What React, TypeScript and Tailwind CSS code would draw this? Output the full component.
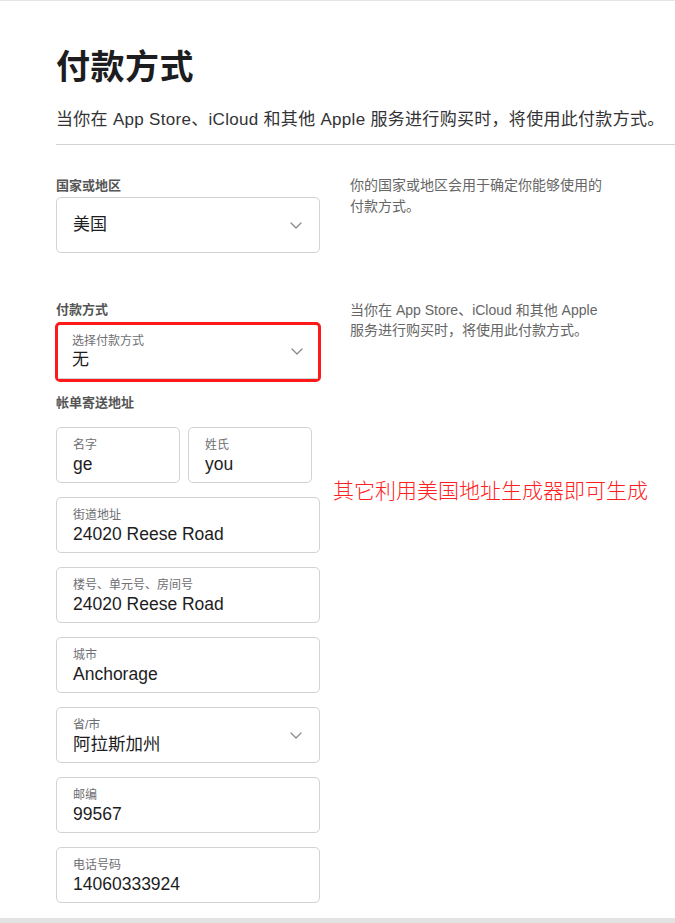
const font = { fontFamily: '"Liberation Sans", "Noto Sans CJK SC", sans-serif' };

function Chevron() {
  return (
    <svg width="12" height="7" viewBox="0 0 12 7" fill="none" className="shrink-0">
      <path d="M1 1l5 5 5-5" stroke="#86868b" strokeWidth="1.2" strokeLinecap="round" strokeLinejoin="round" />
    </svg>
  );
}

function Field({ label, value, select, className = 'w-[264px]' }: { label: string; value: string; select?: boolean; className?: string }) {
  return (
    <div className={`h-[56px] border border-[#d2d2d7] rounded-[5px] bg-white flex items-center pl-[16px] pr-[17px] ${className}`}>
      <div className="flex-1 min-w-0 pt-[1px]">
        <div className="text-[12px] leading-[16px] text-[#6e6e73]">{label}</div>
        <div className="text-[17.5px] leading-[22px] text-[#1d1d1f]">{value}</div>
      </div>
      {select && <Chevron />}
    </div>
  );
}

export default function App() {
  return (
    <div className="w-[675px] h-[923px] bg-white relative overflow-hidden border-t border-[#e5e5e5]" style={font}>
      <div className="pl-[56px] pt-[46px]">
        <h1 className="text-[34px] leading-[40px] font-bold text-[#1d1d1f] tracking-[0.5px]">付款方式</h1>
        <p className="mt-[22px] text-[17px] leading-[22px] text-[#333336] whitespace-nowrap tracking-[0.3px]">
          当你在 App Store、iCloud 和其他 Apple 服务进行购买时，将使用此付款方式。
        </p>
        <div className="mt-[13px] h-px bg-[#d2d2d7]" />

        <div className="mt-[32px] flex">
          <div className="w-[264px]">
            <div className="text-[13px] leading-[18px] font-bold text-[#555]">国家或地区</div>
            <div className="mt-[2px] h-[56px] border border-[#d2d2d7] rounded-[5px] flex items-center pl-[16px] pr-[17px]">
              <div className="flex-1 text-[17px] text-[#1d1d1f]">美国</div>
              <Chevron />
            </div>
          </div>
          <div className="ml-[30px] w-[260px] text-[14px] leading-[21px] text-[#666] -mt-[2px]">
            你的国家或地区会用于确定你能够使用的付款方式。
          </div>
        </div>

        <div className="mt-[48px] flex">
          <div className="w-[264px]">
            <div className="text-[13px] leading-[18px] font-bold text-[#555]">付款方式</div>
            <div className="mt-[3px] rounded-[5px] border-[3px] border-[#ff1a1a] -mx-px">
              <div className="h-[54px] border-b border-[#d2d2d7] flex items-center pl-[14px] pr-[15px]">
                <div className="flex-1 min-w-0">
                  <div className="text-[12px] leading-[16px] text-[#6e6e73]">选择付款方式</div>
                  <div className="text-[17px] leading-[22px] text-[#1d1d1f]">无</div>
                </div>
                <Chevron />
              </div>
            </div>
          </div>
          <div className="ml-[30px] w-[260px] text-[14px] leading-[20px] text-[#666] -mt-[1px]">
            当你在 App Store、iCloud 和其他 Apple 服务进行购买时，将使用此付款方式。
          </div>
        </div>

        <div className="mt-[12px] text-[13px] leading-[18px] font-bold text-[#555]">帐单寄送地址</div>

        <div className="mt-[15px] flex">
          <div className="flex flex-col gap-[14px]">
            <div className="flex gap-[8px]">
              <Field label="名字" value="ge" className="w-[124px]" />
              <Field label="姓氏" value="you" className="w-[124px]" />
            </div>
            <Field label="街道地址" value="24020 Reese Road" />
            <Field label="楼号、单元号、房间号" value="24020 Reese Road" />
            <Field label="城市" value="Anchorage" />
            <Field label="省/市" value="阿拉斯加州" select />
            <Field label="邮编" value="99567" />
            <Field label="电话号码" value="14060333924" />
          </div>
          <div className="ml-[13px] mt-[49px] text-[21px] leading-[26px] text-[#ff2020] whitespace-nowrap" style={{ fontFamily: '"Noto Sans CJK SC", sans-serif', fontWeight: 300 }}>
            其它利用美国地址生成器即可生成
          </div>
        </div>
      </div>
      <div className="absolute left-0 right-0 bottom-0 h-[5px] bg-[#e3e3e3]" />
    </div>
  );
}
